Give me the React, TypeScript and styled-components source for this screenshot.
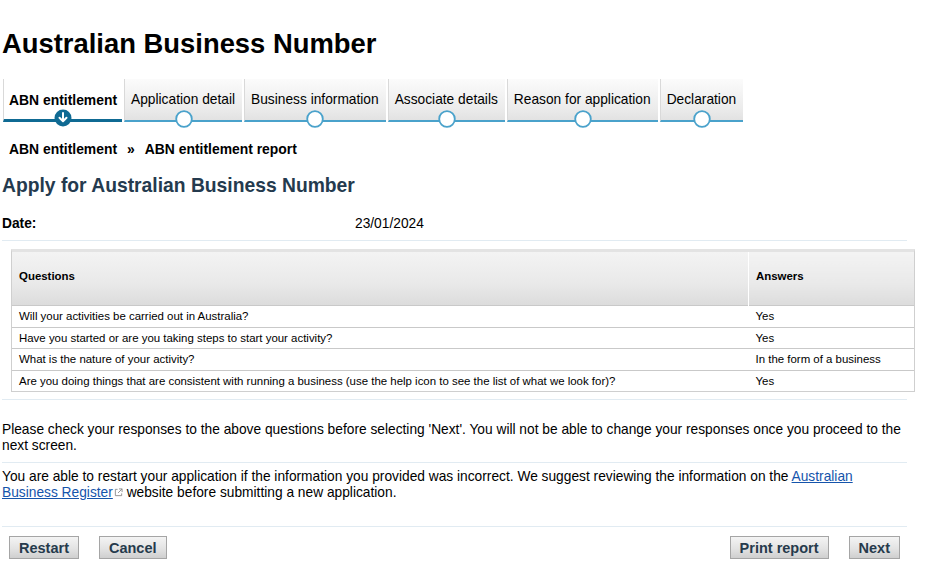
import React from "react";
import styled, { createGlobalStyle } from "styled-components";

const GlobalStyle = createGlobalStyle`
  html, body {
    margin: 0;
    padding: 0;
    background: #ffffff;
  }
  body {
    font-family: "Liberation Sans", Arial, Helvetica, sans-serif;
    font-size: 13.75px;
    color: #000;
  }
`;

const Page = styled.div`
  width: 905px;
  padding: 28px 0 0 2px;
`;

const Title = styled.h1`
  margin: 0 0 20px;
  font-size: 27.4px;
  line-height: 31px;
  font-weight: bold;
  color: #000;
`;

const TabBar = styled.ul`
  list-style: none;
  margin: 0 0 19px 1px;
  padding: 0;
  display: flex;
  gap: 2px;
`;

const Tab = styled.li<{ $active?: boolean }>`
  position: relative;
  padding: ${(p) => (p.$active ? "13px 5px 11px 5px" : "13px 7px 12px 6px")};
  font-size: ${(p) => (p.$active ? "13.9px" : "13.75px")};
  line-height: 16px;
  white-space: nowrap;
  font-weight: ${(p) => (p.$active ? "bold" : "normal")};
  border-left: 1px solid #d9d9d9;
  background: ${(p) =>
    p.$active ? "#ffffff" : "linear-gradient(to bottom, #fbfbfb 0%, #ececec 70%, #e2e2e2 100%)"};
  border-bottom: ${(p) => (p.$active ? "3px solid #0f6a93" : "2px solid #4aa2cb")};
`;

const Marker = styled.span`
  position: absolute;
  left: 50%;
  bottom: -8px;
  width: 18px;
  height: 18px;
  margin-left: -9px;
  display: block;
`;

const Crumbs = styled.div`
  display: flex;
  gap: 10px;
  padding-left: 7px;
  margin-bottom: 18px;
  font-size: 13.9px;
  line-height: 16px;
  font-weight: bold;
`;

const Heading = styled.h2`
  margin: 0 0 19px;
  font-size: 19.3px;
  line-height: 22px;
  font-weight: bold;
  color: #243a4e;
`;

const Section = styled.div<{ $pb?: number }>`
  border-bottom: 1px solid #e1ebf2;
  padding-bottom: ${(p) => p.$pb ?? 8}px;
`;

const DateRow = styled(Section)`
  display: grid;
  grid-template-columns: 353px 1fr;
  font-size: 13.75px;
  line-height: 16px;
`;

const Label = styled.span`
  font-weight: bold;
`;

const TableWrap = styled.div`
  margin: 8px 0 0 9px;
  width: 904px;
  border: 1px solid #cfcfcf;
  border-top: 3px solid #e3e3e3;
  box-sizing: border-box;
`;

const Table = styled.table`
  width: 100%;
  border-collapse: collapse;
  font-size: 11.45px;
  line-height: 13px;
`;

const Th = styled.th<{ $w?: number }>`
  height: 49px;
  padding: 0 7px 4px;
  text-align: left;
  font-weight: bold;
  vertical-align: middle;
  background: linear-gradient(to bottom, #f3f3f3 0%, #e9e9e9 60%, #dcdcdc 100%);
  width: ${(p) => (p.$w ? `${p.$w}px` : "auto")};
  & + & {
    border-left: 1px solid #ffffff;
  }
`;

const Td = styled.td`
  padding: 4px 7px 3.5px;
  border-top: 1px solid #c9c9c9;
  background: #fff;
`;

const TableFoot = styled.div`
  border-bottom: 1px solid #e1ebf2;
  height: 7px;
`;

const Para = styled.p`
  margin: 0;
  font-size: 13.75px;
  line-height: 16px;
`;

const Block = styled(Section)<{ $pt?: number }>`
  padding-top: ${(p) => p.$pt ?? 6}px;
`;

const Link = styled.a`
  color: #1554ab;
  text-decoration: underline;
`;

const Ext = styled.svg`
  width: 9px;
  height: 9px;
  margin-left: 1px;
  vertical-align: 0px;
`;

const Actions = styled.div`
  display: flex;
  justify-content: space-between;
  padding: 9px 7px 0;
`;

const Group = styled.div`
  display: flex;
  gap: 20px;
`;

const Button = styled.button`
  height: 23px;
  padding: 0 9px;
  font-family: "Liberation Sans", Arial, sans-serif;
  font-size: 14.5px;
  font-weight: bold;
  color: #263a4c;
  background: linear-gradient(to bottom, #f4f4f4 0%, #e3e3e3 55%, #cfcfcf 100%);
  border: 1px solid #a5a5a5;
  border-radius: 0;
  cursor: pointer;
`;

const ActiveMarker = () => (
  <svg viewBox="0 0 18 18" width="18" height="18">
    <circle cx="9" cy="9" r="8.5" fill="#0f6a93" />
    <path d="M9 4v8M5.5 8.8 9 12.3l3.5-3.5" stroke="#fff" strokeWidth="2" fill="none" strokeLinecap="round" strokeLinejoin="round" />
  </svg>
);

const IdleMarker = () => (
  <svg viewBox="0 0 18 18" width="18" height="18">
    <circle cx="9" cy="9" r="7.8" fill="#fff" stroke="#4aa2cb" strokeWidth="1.8" />
  </svg>
);

const tabs = [
  "ABN entitlement",
  "Application detail",
  "Business information",
  "Associate details",
  "Reason for application",
  "Declaration",
];

const rows = [
  ["Will your activities be carried out in Australia?", "Yes"],
  ["Have you started or are you taking steps to start your activity?", "Yes"],
  ["What is the nature of your activity?", "In the form of a business"],
  [
    "Are you doing things that are consistent with running a business (use the help icon to see the list of what we look for)?",
    "Yes",
  ],
];

export default function App() {
  return (
    <Page>
      <GlobalStyle />
      <Title>Australian Business Number</Title>

      <TabBar>
        {tabs.map((t, i) => (
          <Tab key={t} $active={i === 0}>
            {t}
            <Marker>{i === 0 ? <ActiveMarker /> : <IdleMarker />}</Marker>
          </Tab>
        ))}
      </TabBar>

      <Crumbs>
        <span>ABN entitlement</span>
        <span>»</span>
        <span>ABN entitlement report</span>
      </Crumbs>

      <Heading>Apply for Australian Business Number</Heading>

      <DateRow>
        <Label>Date:</Label>
        <span>23/01/2024</span>
      </DateRow>

      <TableWrap>
        <Table>
          <thead>
            <tr>
              <Th>Questions</Th>
              <Th $w={151}>Answers</Th>
            </tr>
          </thead>
          <tbody>
            {rows.map(([q, a]) => (
              <tr key={q}>
                <Td>{q}</Td>
                <Td>{a}</Td>
              </tr>
            ))}
          </tbody>
        </Table>
      </TableWrap>
      <TableFoot />

      <Block $pt={22}>
        <Para>
          Please check your responses to the above questions before selecting 'Next'. You will not be able to
          change your responses once you proceed to the next screen.
        </Para>
      </Block>

      <Block $pt={6} $pb={25}>
        <Para>
          You are able to restart your application if the information you provided was incorrect. We suggest
          reviewing the information on the{" "}
          <Link href="#">Australian Business Register</Link>
          <Ext viewBox="0 0 10 10">
            <path d="M4 1.5H1.5v7h7V6" stroke="#8a8a8a" strokeWidth="1" fill="none" />
            <path d="M5.5 1h3.5v3.5M9 1 4.5 5.5" stroke="#8a8a8a" strokeWidth="1" fill="none" />
          </Ext>{" "}
          website before submitting a new application.
        </Para>
      </Block>

      <Actions>
        <Group>
          <Button>Restart</Button>
          <Button>Cancel</Button>
        </Group>
        <Group>
          <Button>Print report</Button>
          <Button>Next</Button>
        </Group>
      </Actions>
    </Page>
  );
}
